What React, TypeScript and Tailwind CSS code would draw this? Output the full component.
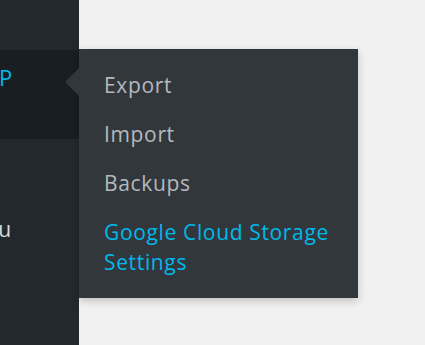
import React from "react";

export default function App() {
  const font = { fontFamily: '"Open Sans", "Noto Sans", sans-serif' };
  return (
    <div className="relative flex h-[345px] w-[425px] overflow-hidden bg-[#f1f1f1]" style={font}>
      <div className="flex w-[79px] flex-col overflow-hidden bg-[#23282d]">
        <div className="h-[50px]" />
        <div className="flex h-[89px] items-start bg-[#191e23] pt-[12px]">
          <span className="ml-[-22px] whitespace-nowrap text-[22px] leading-[30px] tracking-[0.6px] text-[#00b9eb]">WP</span>
        </div>
        <div className="mt-[75px] flex">
          <span className="ml-[-47px] whitespace-nowrap text-[21px] leading-[30px] tracking-[0.6px] text-[#dcdcdc]">Menu</span>
        </div>
      </div>
      <div className="absolute left-[79px] top-[49px] h-[249px] w-[279px] bg-[#32373c] pb-[12px] pl-[25px] pr-[20px] pt-[12px] shadow-[0_3px_8px_rgba(0,0,0,0.2)]">
        <div className="absolute left-[-14px] top-[19px] h-0 w-0 border-y-[14px] border-r-[14px] border-y-transparent border-r-[#32373c]" />
        <ul className="flex flex-col text-[21px] leading-[30px] tracking-[0.65px]">
          <li className="pb-[10px] pt-[9px] text-[#b4b9be]">Export</li>
          <li className="pb-[10px] pt-[9px] text-[#b4b9be]">Import</li>
          <li className="pb-[10px] pt-[9px] text-[#b4b9be]">Backups</li>
          <li className="pb-[10px] pt-[9px] text-[#00b9eb]">Google Cloud Storage Settings</li>
        </ul>
      </div>
    </div>
  );
}
